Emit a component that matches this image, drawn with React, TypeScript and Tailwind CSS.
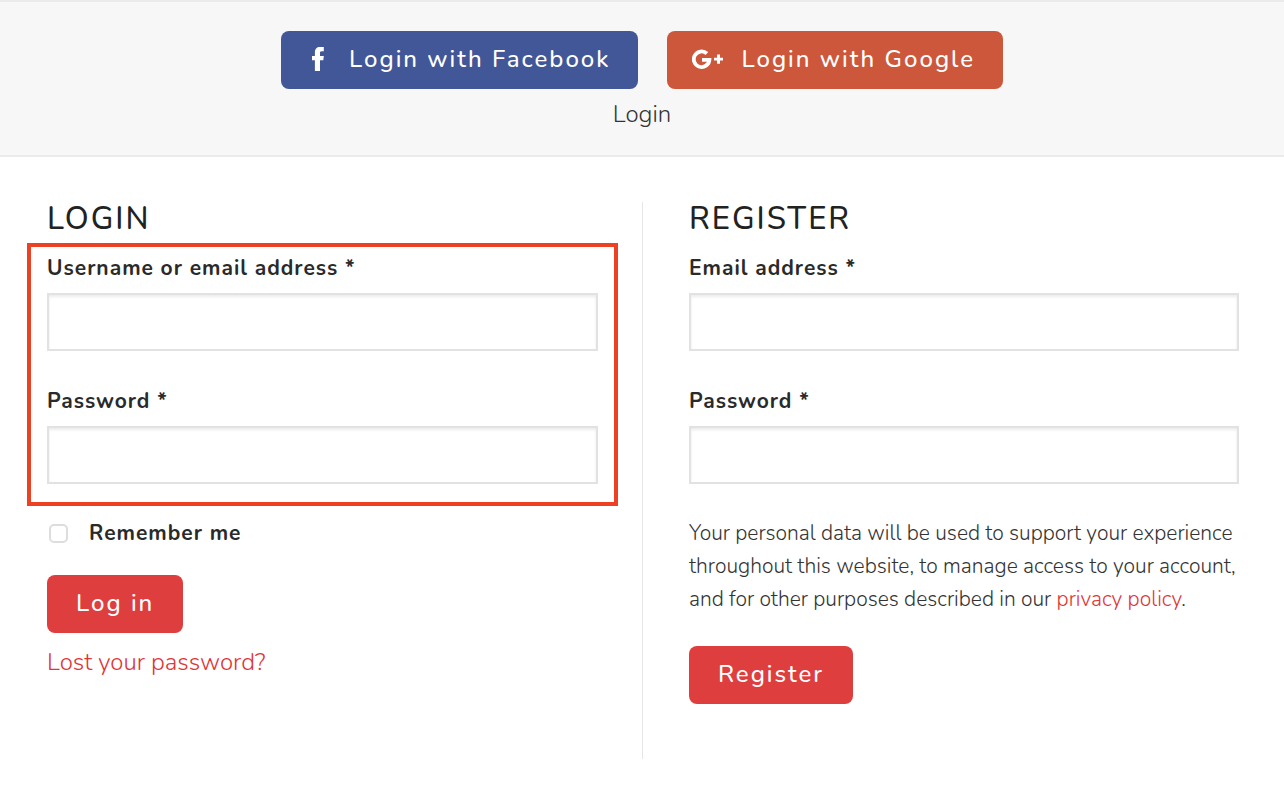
import React from "react";

type ButtonProps = React.ButtonHTMLAttributes<HTMLButtonElement>;

const Button: React.FC<ButtonProps> = ({ children, className = "", ...rest }) => (
  <button
    className={`h-[58px] rounded-lg pb-[2px] text-2xl font-medium tracking-[2px] text-white ${className}`}
    {...rest}
  >
    {children}
  </button>
);

type FieldProps = {
  id: string;
  label: string;
  type: string;
};

const Field: React.FC<FieldProps> = ({ id, label, type }) => (
  <div>
    <label htmlFor={id} className="mb-2 block text-[21px] leading-[34px] font-bold tracking-[1px] text-[#2a2a2a]">
      {label} *
    </label>
    <input
      id={id}
      type={type}
      className="block h-[58px] w-full border-2 border-[#e2e2e2] bg-white px-4 text-xl shadow-[inset_0_2px_3px_rgba(0,0,0,0.08)]"
    />
  </div>
);

const FacebookIcon: React.FC = () => (
  <svg width="12" height="24" viewBox="0 0 12 24" fill="currentColor" aria-hidden="true">
    <path d="M2.9 24V13.2H0V9H2.9V5.6C2.9 2 4.7 0 8 0H11.8V4.2H9.6C8.3 4.2 8 4.9 8 6V9H11.8L11.3 13.2H8V24Z" />
  </svg>
);

const GoogleIcon: React.FC = () => (
  <svg width="32" height="20" viewBox="0 0 32 20" aria-hidden="true">
    <path
      d="M14.9 4.5A7.8 7.8 0 1 0 17.4 10.8H10"
      fill="none"
      stroke="currentColor"
      strokeWidth="3.8"
    />
    <path d="M25 5.6H28V8.7H31V11.6H28V14.7H25V11.6H22V8.7H25Z" fill="currentColor" />
  </svg>
);

const Title: React.FC<{ children: React.ReactNode }> = ({ children }) => (
  <h2 className="text-[31px] leading-[34px] font-medium tracking-[2px] text-[#222] uppercase">{children}</h2>
);

const App: React.FC = () => {
  return (
    <div className="min-h-screen bg-white font-['Nunito','Lato',sans-serif] font-light text-[#333]">
      <header className="flex flex-col items-center border-y-2 border-[#ebebeb] bg-[#f7f7f7] pt-[29px] pb-[23px]">
        <div className="flex flex-wrap justify-center gap-[29px]">
          <Button type="button" className="flex items-center gap-[25px] bg-[#425797] pr-7 pl-[31px]">
            <FacebookIcon />
            Login with Facebook
          </Button>
          <Button type="button" className="flex items-center gap-[17px] bg-[#cd573b] pr-7 pl-[25px]">
            <GoogleIcon />
            Login with Google
          </Button>
        </div>
        <h1 className="mt-[7px] text-2xl leading-9">Login</h1>
      </header>

      <main className="grid grid-cols-2 pt-[45px] pr-[45px] pb-[42px] pl-[47px]">
        <section className="border-r border-[#e6e6e6] pr-11 pb-[78px]">
          <Title>Login</Title>
          <form onSubmit={(e) => e.preventDefault()}>
            <div className="-mx-5 mt-[7px] flex flex-col gap-[33px] border-4 border-[#ee4023] px-4 pt-1 pb-[18px]">
              <Field id="username" label="Username or email address" type="text" />
              <Field id="password" label="Password" type="password" />
            </div>
            <label className="mt-[10px] flex items-center text-[21px] leading-[34px] font-bold tracking-[1px] text-[#2a2a2a]">
              <input
                type="checkbox"
                className="mr-[21px] ml-[2px] size-[19px] appearance-none rounded-[5px] border-2 border-[#ddd] bg-white checked:bg-[#df3e3f]"
              />
              Remember me
            </label>
            <Button type="submit" className="mt-[25px] bg-[#df3e3f] px-[29px]">
              Log in
            </Button>
          </form>
          <a href="#lost" className="mt-[10px] block text-2xl leading-[38px] text-[#df3436]">
            Lost your password?
          </a>
        </section>

        <section className="pl-[46px]">
          <Title>Register</Title>
          <form onSubmit={(e) => e.preventDefault()}>
            <div className="mt-[15px] flex flex-col gap-[33px]">
              <Field id="reg-email" label="Email address" type="email" />
              <Field id="reg-password" label="Password" type="password" />
            </div>
            <p className="mt-[33px] text-[21px] leading-[33px]">
              Your personal data will be used to support your experience throughout this website, to manage access to
              your account, and for other purposes described in our{" "}
              <a href="#privacy" className="text-[#df3436]">
                privacy policy
              </a>
              .
            </p>
            <Button type="submit" className="mt-[30px] bg-[#df3e3f] px-[29px]">
              Register
            </Button>
          </form>
        </section>
      </main>
    </div>
  );
};

export default App;
